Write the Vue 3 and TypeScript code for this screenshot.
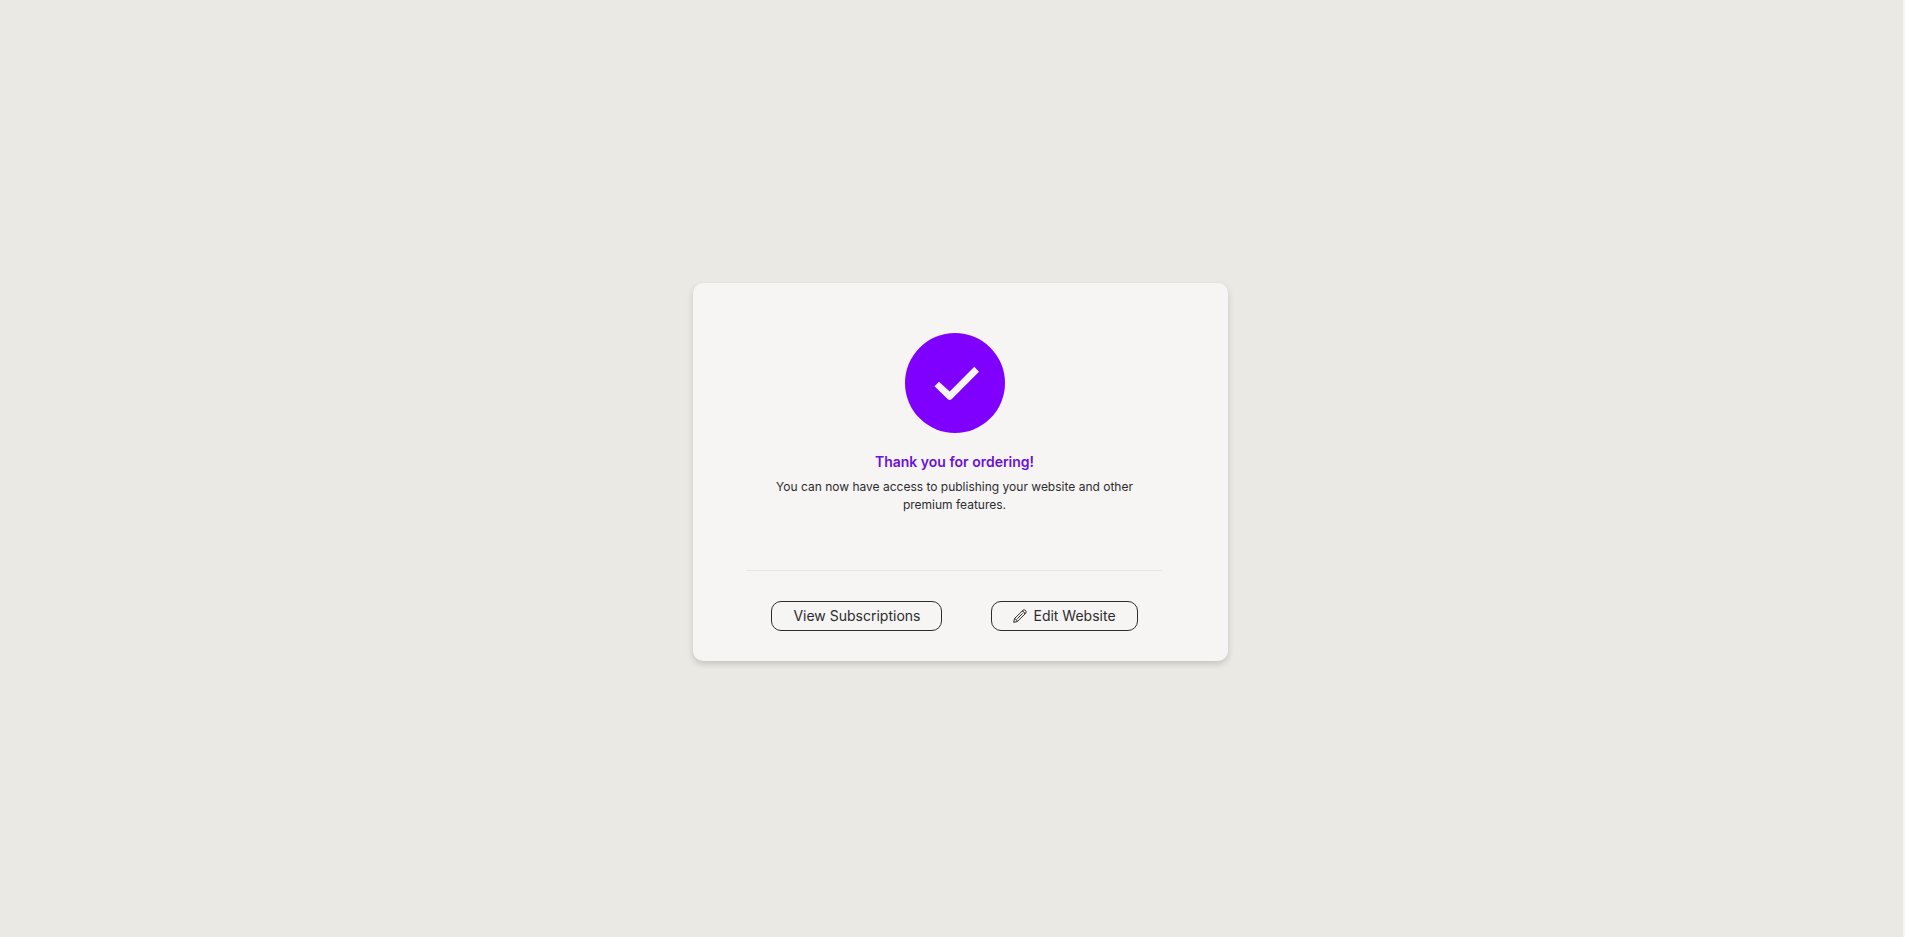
<script setup lang="ts">
const title: string = 'Thank you for ordering!'
const message: string =
  'You can now have access to publishing your website and other premium features.'
</script>

<template>
  <main class="page">
    <section class="card">
      <svg class="badge" viewBox="0 0 100 100" aria-hidden="true">
        <circle cx="50" cy="50" r="50" fill="#8000ff" />
        <path
          d="M29.5 53.3 34 48.7 44.7 58.6 69.3 33.7 74 38.7 46.6 66.2Q44.7 67.8 42.8 66.2Z"
          fill="#f6f5f3"
        />
      </svg>
      <h1 class="title">{{ title }}</h1>
      <p class="message">{{ message }}</p>
      <hr class="divider" />
      <div class="actions">
        <button class="action" type="button">View Subscriptions</button>
        <button class="action" type="button">
          <svg class="pencil" viewBox="0 0 14 14" aria-hidden="true">
            <path
              d="M.7 13.3 1.5 9.6 9.9 1.3Q11.2 .1 12.5 1.5 13.8 2.9 12.7 4.2L4.4 12.5ZM1.5 9.6Q3.8 10 4.4 12.5M9.1 2.1Q11.4 2.6 11.9 5M9.6 4.4 4.3 9.7"
              fill="none"
              stroke="currentColor"
              stroke-width="1"
              stroke-linejoin="round"
            />
          </svg>
          Edit Website
        </button>
      </div>
    </section>
  </main>
</template>

<style>
body {
  margin: 0;
}
</style>

<style scoped>
.page {
  box-sizing: border-box;
  min-height: 100vh;
  display: flex;
  align-items: center;
  justify-content: center;
  padding: 16px 0 10px 18px;
  background: #eae9e4;
  border-right: 2px solid #f6f5f3;
  font-family: Inter, "Liberation Sans", sans-serif;
  color: #2c2c30;
}

.card {
  box-sizing: border-box;
  width: 535px;
  max-width: 100%;
  padding: 50px 66px 30px 54px;
  display: flex;
  flex-direction: column;
  align-items: center;
  background: #f6f5f3;
  border-radius: 10px;
  box-shadow: 0 3px 6px rgba(0, 0, 0, 0.16);
}

.badge {
  width: 100px;
  height: 100px;
}

.title {
  margin: 20px 0 7px;
  font-size: 14px;
  font-weight: 600;
  line-height: 18px;
  color: #6a11d8;
}

.message {
  margin: 0;
  max-width: 376px;
  font-size: 12px;
  line-height: 18px;
  text-align: center;
}

.divider {
  width: 100%;
  height: 1px;
  margin: 56px 0 30px;
  border: 0;
  background: #e6e5e2;
}

.actions {
  display: flex;
  flex-wrap: wrap;
  justify-content: center;
  gap: 12px 49px;
}

.action {
  display: flex;
  align-items: center;
  gap: 6px;
  height: 30px;
  padding: 0 21px;
  border: 1px solid #2c2c30;
  border-radius: 10px;
  background: transparent;
  font: inherit;
  font-size: 14px;
  color: inherit;
  cursor: pointer;
}

.pencil {
  width: 14px;
  height: 14px;
}
</style>
